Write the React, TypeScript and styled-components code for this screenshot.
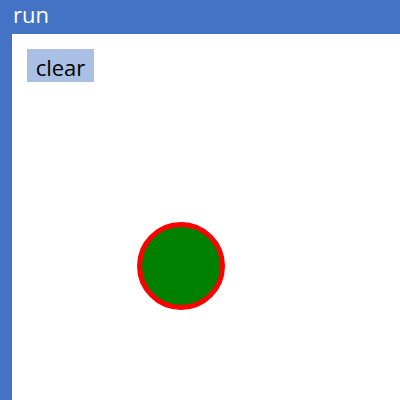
import styled, { createGlobalStyle } from 'styled-components'

const GlobalStyle = createGlobalStyle`
  html, body {
    margin: 0;
    padding: 0;
    background: #ffffff;
  }
  body {
    font-family: "Open Sans", "Noto Sans", sans-serif;
  }
`

export default function App() {
  return (
    <>
      <GlobalStyle />
      <Window$>
        <TitleBar$>run</TitleBar$>
        <Body$>
          <Canvas$>
            <ClearButton$>clear</ClearButton$>
            <Dot$ x={181} y={232} size={88} />
          </Canvas$>
        </Body$>
      </Window$>
    </>
  )
}

const Window$ = styled.div`
  width: 400px;
  height: 400px;
  display: flex;
  flex-direction: column;
  background: #4472c4;
  overflow: hidden;
`

const TitleBar$ = styled.div`
  height: 34px;
  flex: none;
  padding-left: 13px;
  color: #ffffff;
  font-size: 22px;
  line-height: 28px;
`

const Body$ = styled.div`
  flex: 1;
  display: flex;
  padding-left: 12px;
`

const Canvas$ = styled.div`
  position: relative;
  flex: 1;
  background: #ffffff;
  padding: 15px 0 0 15px;
`

const ClearButton$ = styled.button`
  width: 67px;
  height: 33px;
  border: none;
  padding: 0;
  background: #a9bfe4;
  color: #000000;
  font-family: "Open Sans", "Noto Sans", sans-serif;
  font-size: 22px;
  line-height: 36px;
  cursor: pointer;
`

const Dot$ = styled.div<{ x: number; y: number; size: number }>`
  position: absolute;
  left: ${(p) => p.x - 12 - p.size / 2}px;
  top: ${(p) => p.y - p.size / 2}px;
  width: ${(p) => p.size}px;
  height: ${(p) => p.size}px;
  box-sizing: border-box;
  border-radius: 50%;
  border: 5px solid #ff0000;
  background: #008000;
`
